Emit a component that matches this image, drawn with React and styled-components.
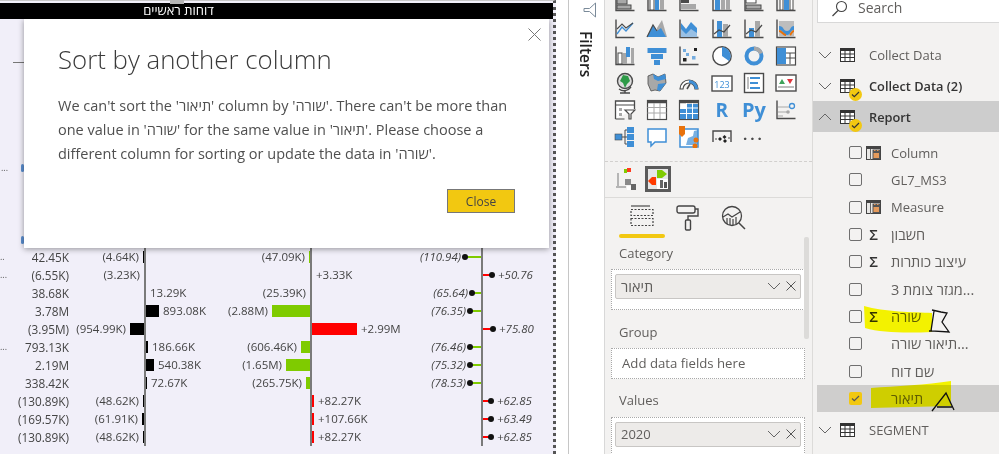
import React from 'react';
import styled, { createGlobalStyle } from 'styled-components';

const FONT = '"Open Sans", "Liberation Sans", sans-serif';
const BLUE = '#3f8fd6';
const DARK = '#4a4a4a';
const GRAY = '#a8a8a8';

const GlobalStyle = createGlobalStyle`
  html, body {
    margin: 0;
    padding: 0;
    background: #fff;
    font-family: ${FONT};
  }
`;

const Page = styled.div`
  position: relative;
  display: flex;
  width: 999px;
  height: 454px;
  overflow: hidden;
  background: #fff;
  filter: blur(0.3px);
`;

/* ---------- report canvas ---------- */

const Canvas = styled.div`
  position: relative;
  flex: none;
  width: 556px;
  height: 454px;
  margin-right: 12px;
  padding-top: 3px;
  box-sizing: border-box;
  background: #f1eff9;
  border-right: 3px dotted #555;
  border-top: 1px solid #c8c8c8;
`;

const Handle = styled.div`
  position: absolute;
  top: -1px;
  left: 170px;
  width: 14px;
  height: 4px;
  background: #b5b5b5;
`;

const TitleBar = styled.div`
  height: 16px;
  margin-top: -1px;
  background: #000;
  color: #fff;
  font-size: 13px;
  line-height: 15px;
  text-align: center;
  padding-right: 196px;
`;

const Dash = styled.div`
  position: absolute;
  left: 13px;
  top: 61px;
  width: 12px;
  height: 1px;
  background: #777;
`;

const BlueTick = styled.div`
  position: absolute;
  left: 21px;
  top: ${(p) => p.$top}px;
  width: 3px;
  height: 8px;
  border-radius: 2px;
  background: #5b8fd0;
`;

const HiddenDots = styled.div`
  position: absolute;
  left: 1px;
  top: 160px;
  font-size: 9px;
  color: #555;
`;

const ChartRows = styled.div`
  margin-top: 229px;
`;

const ChartRow = styled.div`
  display: grid;
  grid-template-columns: 70px 158px 172px 147px;
  height: 18px;
  font-size: 11.5px;
  line-height: 18px;
  color: #444;
`;

const FirstCol = styled.div`
  display: flex;
  justify-content: space-between;
  padding-right: 1px;
  font-size: 11.8px;
`;

const Dots = styled.span`
  color: #555;
  font-size: 9px;
`;

const Cell = styled.div`
  display: grid;
  grid-template-columns: ${(p) => p.$axis}px 1fr;
`;

const Half = styled.div`
  display: flex;
  align-items: center;
  gap: 4px;
  white-space: nowrap;
  justify-content: ${(p) => (p.$side === 'neg' ? 'flex-end' : 'flex-start')};
  border-left: ${(p) => (p.$side === 'pos' ? '2px solid #7a7a7a' : 'none')};
  font-style: ${(p) => (p.$italic ? 'italic' : 'normal')};
`;

const Bar = styled.div`
  height: 12px;
  width: ${(p) => p.$w}px;
  background: ${(p) => p.$color};
`;

const Stem = styled.div`
  position: relative;
  height: 2px;
  width: ${(p) => p.$w}px;
  background: ${(p) => p.$color};
  &::after {
    content: '';
    position: absolute;
    top: -2px;
    ${(p) => (p.$side === 'neg' ? 'left: -3px;' : 'right: -3px;')}
    width: 6px;
    height: 6px;
    border-radius: 50%;
    background: #111;
  }
`;

const PosStem = styled(Stem)`
  margin-right: 2px;
`;

const GREEN = '#7fcb00';
const RED = '#ff0000';

function BarCell({ axis, value, w, color, side }) {
  const bar = <Bar $w={w} $color={color} />;
  return (
    <Cell $axis={axis}>
      <Half $side="neg">
        {side === 'neg' && <span>{value}</span>}
        {side === 'neg' && bar}
      </Half>
      <Half $side="pos">
        {side === 'pos' && bar}
        {side === 'pos' && <span>{value}</span>}
      </Half>
    </Cell>
  );
}

function LolliCell({ value, w, side }) {
  const color = side === 'neg' ? GREEN : RED;
  return (
    <Cell $axis={81}>
      <Half $side="neg" $italic>
        {side === 'neg' && <span>{value}</span>}
        {side === 'neg' && <Stem $w={w} $color={color} $side="neg" />}
      </Half>
      <Half $side="pos" $italic>
        {side === 'pos' && <PosStem $w={w} $color={color} $side="pos" />}
        {side === 'pos' && <span>{value}</span>}
      </Half>
    </Cell>
  );
}

const rows = [
  { dots: '..', a: '42.45K', b: ['(4.64K)', 1, 'neg'], c: ['(47.09K)', 1, 'neg'], d: ['(110.94)', 16, 'neg'] },
  { dots: '...', a: '(6.55K)', b: ['(3.23K)', 0, 'neg'], c: ['+3.33K', 0, 'pos'], d: ['+50.76', 9, 'pos'] },
  { a: '38.68K', b: ['13.29K', 0, 'pos'], c: ['(25.39K)', 0, 'neg'], d: ['(65.64)', 9, 'neg'] },
  { a: '3.78M', b: ['893.08K', 13, 'pos'], c: ['(2.88M)', 43, 'neg'], d: ['(76.35)', 11, 'neg'] },
  { a: '(3.95M)', b: ['(954.99K)', 14, 'neg'], c: ['+2.99M', 45, 'pos'], d: ['+75.80', 10, 'pos'] },
  { dots: '...', a: '793.13K', b: ['186.66K', 2, 'pos'], c: ['(606.46K)', 9, 'neg'], d: ['(76.46)', 11, 'neg'] },
  { a: '2.19M', b: ['540.38K', 8, 'pos'], c: ['(1.65M)', 24, 'neg'], d: ['(75.32)', 11, 'neg'] },
  { a: '338.42K', b: ['72.67K', 1, 'pos'], c: ['(265.75K)', 4, 'neg'], d: ['(78.53)', 11, 'neg'] },
  { a: '(130.89K)', b: ['(48.62K)', 1, 'neg'], c: ['+82.27K', 2, 'pos'], d: ['+62.85', 8, 'pos'] },
  { a: '(169.57K)', b: ['(61.91K)', 2, 'neg'], c: ['+107.66K', 2, 'pos'], d: ['+63.49', 8, 'pos'] },
  { a: '(130.89K)', b: ['(48.62K)', 1, 'neg'], c: ['+82.27K', 2, 'pos'], d: ['+62.85', 8, 'pos'] },
];

/* ---------- dialog ---------- */

const Dialog = styled.div`
  position: absolute;
  left: 24px;
  top: 18px;
  width: 525px;
  height: 229px;
  box-sizing: border-box;
  padding: 22px 34px 0 34px;
  background: #fff;
  box-shadow: 0 1px 6px rgba(0, 0, 0, 0.4);
`;

const DialogTitle = styled.div`
  font-size: 25.8px;
  font-weight: 300;
  line-height: 36px;
  color: #3a3a3a;
`;

const DialogBody = styled.p`
  margin: 17px 0 0;
  font-size: 14.5px;
  line-height: 24px;
  color: #4f4f4f;
  width: 470px;
`;

const DialogFooter = styled.div`
  display: flex;
  justify-content: flex-end;
  margin-top: 23px;
`;

const CloseButton = styled.button`
  width: 68px;
  height: 24px;
  padding: 0;
  background: #f2c811;
  border: 1.5px solid #777;
  font-family: ${FONT};
  font-size: 12px;
  color: #444;
`;

const CloseX = styled.svg`
  position: absolute;
  right: 8px;
  top: 9px;
`;

/* ---------- filters strip ---------- */

const FilterPane = styled.div`
  flex: none;
  width: 37px;
  height: 454px;
  box-sizing: border-box;
  border-left: 1px solid #c6c6c6;
  border-right: 1px solid #d8d8d8;
  display: flex;
  flex-direction: column;
  align-items: center;
  padding-top: 2px;
`;

const FilterIcon = styled.svg`
  margin-left: 6px;
`;

const FilterLabel = styled.div`
  writing-mode: vertical-rl;
  margin-top: 13px;
  margin-right: 2px;
  font-size: 15.5px;
  font-weight: 600;
  line-height: 16px;
  color: #222;
`;

/* ---------- visualizations pane ---------- */

const VizPane = styled.div`
  position: relative;
  flex: none;
  width: 207px;
  height: 454px;
  overflow: hidden;
  background: #f3f2f1;
`;

const IconGrid = styled.div`
  display: grid;
  grid-template-columns: repeat(6, 32.2px);
  grid-auto-rows: 27px;
  margin: -11.5px 0 0 4px;
`;

const IconCell = styled.div`
  display: flex;
  align-items: center;
  justify-content: center;
`;

const LetterIcon = styled.span`
  color: ${(p) => p.$color || BLUE};
  font-size: ${(p) => p.$size}px;
  font-weight: 700;
  line-height: 1;
  letter-spacing: ${(p) => p.$spacing || 0}px;
  margin-top: ${(p) => p.$lift || 0}px;
`;

const DashedRule = styled.div`
  margin-top: 10px;
  border-top: 1px dashed #d2d0ce;
`;

const CustomIcons = styled.div`
  display: flex;
  align-items: center;
  gap: 8px;
  height: 26px;
  margin: 4px 0 0 10px;
`;

const SelectedVisual = styled.div`
  width: 26px;
  height: 26px;
  box-sizing: border-box;
  border: 3px solid #5a5a5a;
  background: #e6e6e6;
`;

const SolidRule = styled.div`
  margin-top: 5px;
  border-top: 1px solid #dcdbd9;
`;

const Tabs = styled.div`
  display: flex;
  margin-left: 14px;
  height: 40px;
`;

const Tab = styled.div`
  position: relative;
  width: 46px;
  display: flex;
  justify-content: center;
  padding-top: 7px;
  box-sizing: border-box;
  &::after {
    content: '';
    display: ${(p) => (p.$active ? 'block' : 'none')};
    position: absolute;
    left: 0;
    right: 0;
    bottom: 0;
    height: 4px;
    border-radius: 2px;
    background: #f2c811;
  }
`;

const Section = styled.div`
  margin: ${(p) => p.$top}px 0 0 14px;
  height: 18px;
  font-size: 13px;
  line-height: 18px;
  color: #605e5c;
`;

const Well = styled.div`
  box-sizing: border-box;
  width: 194px;
  min-height: ${(p) => p.$height}px;
  margin: ${(p) => p.$top}px 0 0 6px;
  padding: ${(p) => (p.$empty ? 2 : 4)}px 3px 4px;
  background: #fff;
  border: 1px dotted #a9a9a9;
`;

const Placeholder = styled.div`
  padding: 3px 7px 0 7px;
  font-size: 13.2px;
  line-height: 18px;
  color: #605e5c;
`;

const Pill = styled.div`
  display: flex;
  align-items: center;
  justify-content: space-between;
  height: 25px;
  box-sizing: border-box;
  padding: 0 4px 0 5px;
  background: #edebe9;
  border: 1px solid #c8c6c4;
  border-radius: 2px;
  font-size: 13px;
  color: #605e5c;
`;

const PillHebrew = styled.span`
  font-size: 14.5px;
`;

const PillActions = styled.div`
  display: flex;
  align-items: center;
  gap: 5px;
`;

const Scrollbar = styled.div`
  position: absolute;
  left: 199px;
  top: 237px;
  width: 5px;
  height: 102px;
  border-radius: 2px;
  background: #dcdbd9;
`;

/* ---------- fields pane ---------- */

const FieldsPane = styled.div`
  position: relative;
  flex: 1;
  height: 454px;
  overflow: hidden;
  background: #f3f2f1;
  border-left: 1px solid #dcdbd9;
`;

const SearchBox = styled.div`
  display: flex;
  align-items: flex-start;
  gap: 10px;
  height: 23px;
  margin-left: 4px;
  padding-left: 13px;
  box-sizing: border-box;
  background: #fff;
  border: 1px solid #d8d8d8;
  border-top: none;
  border-right: none;
  font-size: 14px;
  line-height: 15px;
  color: #605e5c;
`;

const FieldList = styled.div`
  margin-top: 16px;
`;

const TableRow = styled.div`
  position: relative;
  display: flex;
  align-items: center;
  height: 31px;
  padding-left: 5px;
  background: ${(p) => (p.$open ? '#cdcdcd' : 'transparent')};
  font-size: ${(p) => (p.$bold ? 12.8 : 13)}px;
  font-weight: ${(p) => (p.$bold ? 600 : 400)};
  color: ${(p) => (p.$bold ? '#333' : '#605e5c')};
  margin-top: ${(p) => p.$top || 0}px;
`;

const TableIconSlot = styled.div`
  position: relative;
  display: flex;
  width: 29px;
  margin-left: 8px;
`;

const Badge = styled.div`
  position: absolute;
  left: 9px;
  top: 9px;
  width: 13px;
  height: 13px;
  border-radius: 50%;
  background: #f2c811;
  display: flex;
  align-items: center;
  justify-content: center;
`;

const ItemList = styled.div`
  padding-top: 7px;
`;

const ItemRow = styled.div`
  display: flex;
  align-items: center;
  height: 27.3px;
  margin-left: 4px;
  padding-left: 32px;
  background: ${(p) => (p.$selected ? '#cfcecd' : 'transparent')};
  color: #605e5c;
  white-space: nowrap;
`;

const ItemName = styled.span`
  font-size: ${(p) => (p.$he ? 14.5 : 13)}px;
`;

const Check = styled.div`
  flex: none;
  width: 13px;
  height: 13px;
  box-sizing: border-box;
  border: ${(p) => (p.$on ? 'none' : '1.5px solid #6f6f6f')};
  border-radius: 2px;
  background: ${(p) => (p.$on ? '#f2c811' : 'transparent')};
  display: flex;
  align-items: center;
  justify-content: center;
`;

const ItemIcon = styled.div`
  flex: none;
  width: 15px;
  height: 15px;
  margin: 0 10px 0 4px;
  display: flex;
  align-items: center;
  justify-content: center;
  color: #333;
  font-size: 15px;
  font-weight: 600;
  line-height: 15px;
`;

const Highlighter = styled.svg`
  position: absolute;
  left: 0;
  top: 0;
  mix-blend-mode: multiply;
  pointer-events: none;
`;

const Scribble = styled.svg`
  position: absolute;
  left: 0;
  top: 0;
  pointer-events: none;
`;

/* ---------- drawings ---------- */

const Ico = ({ children, size = 22 }) => (
  <svg width={size} height={size} viewBox="0 0 22 22" fill="none">
    {children}
  </svg>
);

const AxisL = () => <path d="M2 1.5v18h18.5" stroke={DARK} strokeWidth="1.4" />;

const visuals = [
  // row 1, only the bottoms show
  <Ico key="a1"><AxisL /><rect x="3" y="8" width="10" height="5" fill={GRAY} stroke={DARK} /><rect x="3" y="14" width="14" height="4" fill={GRAY} stroke={DARK} /></Ico>,
  <Ico key="a2"><AxisL /><rect x="4" y="5" width="4" height="14" fill="#fff" stroke={DARK} /><rect x="9" y="3" width="4" height="16" fill={BLUE} /><rect x="14" y="8" width="4" height="11" fill={GRAY} /></Ico>,
  <Ico key="a3"><AxisL /><rect x="3" y="7" width="8" height="5" fill={DARK} /><rect x="3" y="13" width="15" height="5" fill={GRAY} /></Ico>,
  <Ico key="a4"><AxisL /><rect x="4" y="3" width="5" height="16" fill={BLUE} /><rect x="10" y="6" width="4" height="13" fill={GRAY} /><rect x="15" y="5" width="4" height="14" fill={GRAY} /></Ico>,
  <Ico key="a5"><AxisL /><rect x="3" y="8" width="10" height="4" fill="#fff" stroke={DARK} /><rect x="3" y="14" width="15" height="4" fill={GRAY} stroke={DARK} /></Ico>,
  <Ico key="a6"><AxisL /><rect x="5" y="5" width="3" height="14" fill="#fff" stroke={DARK} /><rect x="9" y="2" width="5" height="17" fill={BLUE} /><rect x="15" y="8" width="3" height="11" fill="#fff" stroke={DARK} /></Ico>,
  // row 2
  <Ico key="b1"><AxisL /><path d="M3 16l5-7 4 4 7-8" stroke={BLUE} strokeWidth="1.3" /><path d="M3 11l5-5 4 4 7-5" stroke={DARK} strokeWidth="1.1" /></Ico>,
  <Ico key="b2"><path d="M11 10l5-8 5 17H11z" fill={GRAY} /><path d="M1 19l6-12 4 6 4-3 5 9z" fill={BLUE} /><path d="M1 19l6-12 4 6" stroke={DARK} strokeWidth="1.2" /></Ico>,
  <Ico key="b3"><AxisL /><path d="M3 5l5 6 5-7 6 6v9H3z" fill={BLUE} /><path d="M3 11l5 5 5-5 6 4v4H3z" fill="#f3f2f1" opacity=".5" /></Ico>,
  <Ico key="b4"><AxisL /><rect x="6" y="3" width="5" height="16" fill={BLUE} /><rect x="12" y="6" width="5" height="13" fill={GRAY} /><path d="M3 16l5-4 5 2 6-7" stroke={DARK} strokeWidth="1.2" /></Ico>,
  <Ico key="b5"><AxisL /><rect x="6" y="10" width="5" height="9" fill={BLUE} /><rect x="12" y="3" width="5" height="16" fill={GRAY} /><path d="M3 16l5-4 5 2 6-7" stroke={DARK} strokeWidth="1.2" /></Ico>,
  <Ico key="b6"><AxisL /><rect x="4" y="3" width="15" height="16" fill="#bdbdbd" /><path d="M4 8c5 0 4 5 8 5s3-5 7-5v4c-4 0-3 5-7 5s-4-5-8-5z" fill={BLUE} /><path d="M4 13c3 0 4 4 7 4M19 13c-2 0-3 3-4 4" stroke="#e8720c" strokeWidth="2" /></Ico>,
  // row 3
  <Ico key="c1"><AxisL /><rect x="4" y="8" width="4" height="11" fill="#fff" stroke={DARK} /><rect x="9" y="8" width="4" height="11" fill={GRAY} /><rect x="12" y="2" width="4" height="10" fill={BLUE} /><rect x="17" y="3" width="3" height="16" fill={GRAY} /></Ico>,
  <Ico key="c2"><path d="M1.5 3h19v5h-19z" fill={BLUE} /><path d="M5 9h12v5H5z" fill={BLUE} /><path d="M8 15h6v5H8z" fill={BLUE} /></Ico>,
  <Ico key="c3"><AxisL /><rect x="5" y="4" width="3" height="3" fill={BLUE} opacity=".7" /><rect x="8" y="8" width="3" height="3" fill={BLUE} opacity=".7" /><rect x="5" y="13" width="3.5" height="3.5" fill="#222" /><rect x="14" y="11" width="3.5" height="3.5" fill={BLUE} opacity=".7" /><rect x="16" y="3" width="3" height="3" fill="#222" /></Ico>,
  <Ico key="c4"><circle cx="11" cy="11" r="9.2" fill="#fff" stroke={DARK} strokeWidth="1.4" /><path d="M11 11V2a9 9 0 0 1 7 14z" fill={BLUE} /></Ico>,
  <Ico key="c5"><circle cx="11" cy="11" r="7.5" stroke={BLUE} strokeWidth="4" /><path d="M11 3.5a7.5 7.5 0 0 1 7 5" stroke={GRAY} strokeWidth="4" /></Ico>,
  <Ico key="c6"><rect x="1.5" y="2" width="19" height="18" fill="#fff" stroke={DARK} strokeWidth="1.2" /><rect x="2" y="3" width="9" height="16" fill={BLUE} /><path d="M11 8h9M15 8v11M11 13h9" stroke={DARK} /></Ico>,
  // row 4
  <Ico key="d1"><circle cx="11" cy="9" r="7.5" fill="#ddd" stroke={DARK} strokeWidth="1.4" /><path d="M9 3l5 1 2 5-3 3-2 4-2-5-3-2z" fill="#2e9a47" /><path d="M5 17c4 3 9 2 12-2M11 19v2M6 21h10" stroke={DARK} strokeWidth="1.4" /></Ico>,
  <Ico key="d2"><path d="M2 4l5-2 5 3 7-3 1 9-6 8-5-1-4 1-3-7z" fill={GRAY} stroke={DARK} strokeWidth=".8" /><path d="M7 2l5 3 7-3 1 5-8 2-4-2z" fill={BLUE} /><path d="M12 12l8-1-6 8-3-1z" fill={BLUE} /></Ico>,
  <Ico key="d3"><path d="M2 17a9 9 0 0 1 18 0h-3a6 6 0 0 0-12 0z" fill="#fff" stroke={DARK} strokeWidth="1.2" /><path d="M11 8a9 9 0 0 1 9 9h-3a6 6 0 0 0-6-6z" fill={BLUE} /><path d="M9 17l3-5" stroke={DARK} strokeWidth="1.5" /></Ico>,
  <Ico key="d4"><rect x="1" y="4" width="20" height="15" fill="#fff" stroke={DARK} strokeWidth="1.4" /><text x="11" y="15.5" textAnchor="middle" fontSize="9" fontFamily={FONT} fill={BLUE}>123</text></Ico>,
  <Ico key="d5"><rect x="1.5" y="1.5" width="19" height="19" fill="#fff" stroke={DARK} strokeWidth="1.4" /><path d="M5 5v12" stroke={GRAY} strokeWidth="1.5" /><path d="M7 6h10M7 11h8M7 16h10" stroke={BLUE} strokeWidth="2" /></Ico>,
  <Ico key="d6"><rect x="1" y="3" width="20" height="16" fill="#fff" stroke={DARK} strokeWidth="1.4" /><path d="M4 12l3-5 3 5z" fill="#3fa35b" /><path d="M12 7h6l-3 5z" fill="#e0363d" /><path d="M3 15h16" stroke={GRAY} strokeWidth="1.5" /></Ico>,
  // row 5
  <Ico key="e1"><path d="M1.5 20V2h19v8" stroke={DARK} strokeWidth="1.3" fill="#fff" /><path d="M1.5 6h19M1.5 20h9" stroke={DARK} strokeWidth="1.2" /><rect x="5" y="9" width="3" height="3" fill={GRAY} /><rect x="5" y="14" width="3" height="3" fill={GRAY} /><path d="M11 11h10l-4 4v5h-2v-5z" fill="#fff" stroke={DARK} strokeWidth="1.2" /></Ico>,
  <Ico key="e2"><rect x="1.5" y="1.5" width="19" height="19" fill="#fff" stroke={DARK} strokeWidth="1.2" /><path d="M1.5 3h19" stroke={DARK} strokeWidth="2.5" /><path d="M1.5 8.5h19M1.5 14h19M8 4v16M14 4v16" stroke={GRAY} /></Ico>,
  <Ico key="e3"><rect x="1.5" y="1.5" width="19" height="19" fill="#fff" stroke={DARK} strokeWidth="1.2" /><path d="M1.5 3h19" stroke={DARK} strokeWidth="2.5" /><rect x="2" y="10" width="18" height="10" fill={BLUE} /><rect x="9" y="5" width="11" height="15" fill={BLUE} /><path d="M2 9h18M2 14.5h18M8.5 4v16M14.5 4v16" stroke="#fff" /></Ico>,
  <LetterIcon key="e4" $size={19}>R</LetterIcon>,
  <LetterIcon key="e5" $size={20}>Py</LetterIcon>,
  <Ico key="e6"><AxisL /><path d="M3 8h12M3 13h9M3 17h5" stroke={GRAY} strokeWidth="1.2" /><circle cx="17" cy="7" r="2.5" stroke={BLUE} strokeWidth="1.3" /><circle cx="13" cy="13" r="1.8" fill={GRAY} /></Ico>,
  // row 6
  <Ico key="f1"><rect x="1" y="8" width="7" height="6" fill={BLUE} stroke={DARK} strokeWidth=".6" /><path d="M8 11h3M11 4v14M11 4h2M11 11h2M11 18h2" stroke={DARK} /><rect x="13" y="1" width="7" height="6" fill={BLUE} /><rect x="13" y="8" width="7" height="6" fill={BLUE} /><rect x="13" y="15" width="7" height="6" fill={BLUE} /></Ico>,
  <Ico key="f2"><path d="M2 3h18v13H9l-4 4v-4H2z" fill="#fff" stroke={BLUE} strokeWidth="1.5" /></Ico>,
  <Ico key="f3"><rect x="2" y="3" width="18" height="18" fill="#fff" stroke={BLUE} strokeWidth="1.5" /><path d="M8 19l2-7 5-2 1-5 4-1v15z" fill={BLUE} opacity=".7" /><path d="M1 0h6v8l-3 3-3-3z" fill="#e8720c" /><circle cx="18" cy="14" r="2.5" fill="#e8720c" /><circle cx="17" cy="20" r="2.5" fill="#e8720c" /></Ico>,
  <Ico key="f4"><path d="M2 16V5h18v11" stroke={DARK} strokeWidth="1.4" /><path d="M7 13l2-2 2 2-2 2zM11.5 11l2-2 2 2-2 2zM12 15l2-2 2 2-2 2z" fill="#222" /><path d="M4 13h2M17 12h2" stroke={DARK} /></Ico>,
  <LetterIcon key="f5" $size={15} $color={DARK} $spacing={3} $lift={-6}>...</LetterIcon>,
];

const Chevron = ({ up }) => (
  <svg width="14" height="8" viewBox="0 0 14 8" fill="none">
    <path d={up ? 'M1 7l6-6 6 6' : 'M1 1l6 6 6-6'} stroke="#666" strokeWidth="1" />
  </svg>
);

const X = ({ size = 10, color = '#555' }) => (
  <svg width={size} height={size} viewBox="0 0 10 10" fill="none">
    <path d="M.5.5l9 9M9.5.5l-9 9" stroke={color} strokeWidth="1" />
  </svg>
);

const TableIcon = () => (
  <svg width="15" height="14" viewBox="0 0 15 14" fill="none">
    <rect x=".5" y=".5" width="14" height="13" fill="#fff" stroke="#333" />
    <path d="M0 1.5h15" stroke="#333" strokeWidth="3" />
    <path d="M0 6h15M0 9.5h15M5 3v11M10 3v11" stroke="#333" />
  </svg>
);

const CalcIcon = () => (
  <svg width="15" height="14" viewBox="0 0 15 14" fill="none">
    <rect x=".5" y=".5" width="14" height="13" fill="#e8e7e5" stroke="#444" />
    <path d="M0 1.5h15" stroke="#444" strokeWidth="3" />
    <path d="M4.5 3v11" stroke="#666" />
    <rect x="6.5" y="3.5" width="7.5" height="9.5" fill="#555" />
    <rect x="7.5" y="7" width="5.5" height="5" fill="#e59a5b" />
    <path d="M8 4.500h1.500M11 4.500h1.500" stroke="#e59a5b" />
  </svg>
);

const Tick = ({ color = '#333' }) => (
  <svg width="9" height="7" viewBox="0 0 9 7" fill="none">
    <path d="M1 3.5l2.3 2.2L8 1" stroke={color} strokeWidth="1.2" />
  </svg>
);

const items = [
  { name: 'Column', icon: 'calc' },
  { name: 'GL7_MS3' },
  { name: 'Measure', icon: 'calc' },
  { name: 'חשבון', icon: 'sum', he: true },
  { name: 'עיצוב כותרות', icon: 'sum', he: true },
  { name: 'מגזר צומת 3...', he: true },
  { name: 'שורה', icon: 'sum', he: true },
  { name: 'תיאור שורה...', he: true },
  { name: 'שם דוח', he: true },
  { name: 'תיאור', checked: true, he: true },
];

export default function App() {
  return (
    <Page>
      <GlobalStyle />
      <Canvas>
        <Handle />
        <TitleBar>דוחות ראשיים</TitleBar>
        <Dash />
        <BlueTick $top={163} />
        <BlueTick $top={235} />
        <HiddenDots>...</HiddenDots>
        <ChartRows>
          {rows.map((r, i) => (
            <ChartRow key={i}>
              <FirstCol>
                <Dots>{r.dots}</Dots>
                <span>{r.a}</span>
              </FirstCol>
              <BarCell axis={74} value={r.b[0]} w={r.b[1]} side={r.b[2]} color="#000" />
              <BarCell axis={82} value={r.c[0]} w={r.c[1]} side={r.c[2]} color={r.c[2] === 'neg' ? GREEN : RED} />
              <LolliCell value={r.d[0]} w={r.d[1]} side={r.d[2]} />
            </ChartRow>
          ))}
        </ChartRows>
        <Dialog>
          <CloseX width="13" height="13" viewBox="0 0 13 13" fill="none">
            <path d="M.5.5l12 12M12.5.5l-12 12" stroke="#777" strokeWidth="1" />
          </CloseX>
          <DialogTitle>Sort by another column</DialogTitle>
          <DialogBody>
            We can't sort the 'תיאור' column by 'שורה'. There can't be more than one value in 'שורה' for the same value in 'תיאור'. Please choose a different column for sorting or update the data in 'שורה'.
          </DialogBody>
          <DialogFooter>
            <CloseButton>Close</CloseButton>
          </DialogFooter>
        </Dialog>
      </Canvas>

      <FilterPane>
        <FilterIcon width="14" height="16" viewBox="0 0 14 16" fill="none">
          <path d="M12.5 1v14L6.5 9.5H1V6.5h5.5z" stroke="#7a8a99" strokeWidth="1" />
        </FilterIcon>
        <FilterLabel>Filters</FilterLabel>
      </FilterPane>

      <VizPane>
        <IconGrid>
          {visuals.map((v, i) => (
            <IconCell key={i}>{v}</IconCell>
          ))}
        </IconGrid>
        <DashedRule />
        <CustomIcons>
          <svg width="22" height="24" viewBox="0 0 22 24" fill="none">
            <path d="M3 6v14h8M3 20h-2" stroke="#b5b5b5" strokeWidth="2" />
            <rect x="9" y="2" width="3" height="4" fill="#7fcb00" />
            <rect x="12" y="1" width="4" height="4" fill="#ff3b1f" />
            <rect x="10" y="12" width="6" height="6" fill="#8a8a8a" />
            <rect x="16" y="17" width="5" height="6" fill="#666" />
            <rect x="12" y="19" width="4" height="4" fill="#fff" />
          </svg>
          <SelectedVisual>
            <svg width="20" height="20" viewBox="0 0 20 20" fill="none">
              <rect x="9" y="10" width="11" height="10" fill="#fff" />
              <path d="M9 1h5l5 4-5 4H9z" fill="#7fcb00" />
              <path d="M8 8v8H4L0 12l4-4z" fill="#ff3b00" />
              <rect x="12" y="11" width="3" height="8" fill="#666" />
              <rect x="16" y="13" width="3" height="6" fill="#555" />
            </svg>
          </SelectedVisual>
        </CustomIcons>
        <SolidRule />
        <Tabs>
          <Tab $active>
            <svg width="26" height="24" viewBox="0 0 26 24" fill="none">
              <path d="M2 1h19" stroke="#555" strokeWidth="1.3" />
              <path d="M2 4.5h22v6H2zM2 13.5h22v7H2z" stroke="#444" strokeWidth="1.2" strokeDasharray="2 1.5" />
            </svg>
          </Tab>
          <Tab>
            <svg width="24" height="26" viewBox="0 0 24 26" fill="none">
              <rect x="1" y="1" width="18" height="7" rx="2" stroke="#444" strokeWidth="1.4" />
              <path d="M19 4h3v7H12v4" stroke="#444" strokeWidth="1.4" />
              <rect x="9.5" y="15" width="5" height="10" rx="1" stroke="#444" strokeWidth="1.4" />
            </svg>
          </Tab>
          <Tab>
            <svg width="26" height="26" viewBox="0 0 26 26" fill="none">
              <circle cx="11" cy="11" r="9.5" stroke="#444" strokeWidth="1.3" />
              <path d="M2 12l5-3 4 3 8-5" stroke="#444" strokeWidth="1.2" />
              <path d="M6 13v6M9 13v7M12 14v6M15 12v7" stroke="#444" strokeWidth="1.2" />
              <path d="M18 18l6 6" stroke="#444" strokeWidth="1.5" />
            </svg>
          </Tab>
        </Tabs>
        <Section $top={6}>Category</Section>
        <Well $top={7} $height={41}>
          <Pill>
            <PillHebrew>תיאור</PillHebrew>
            <PillActions>
              <Chevron />
              <X />
            </PillActions>
          </Pill>
        </Well>
        <Section $top={13}>Group</Section>
        <Well $top={7} $height={31} $empty>
          <Placeholder>Add data fields here</Placeholder>
        </Well>
        <Section $top={12}>Values</Section>
        <Well $top={8} $height={60}>
          <Pill>
            <span>2020</span>
            <PillActions>
              <Chevron />
              <X />
            </PillActions>
          </Pill>
        </Well>
        <Scrollbar />
      </VizPane>

      <FieldsPane>
        <SearchBox>
          <svg width="17" height="17" viewBox="0 0 17 17" fill="none">
            <circle cx="10.5" cy="6.5" r="5" stroke="#444" strokeWidth="1.1" />
            <path d="M7 10.5L1.500 16" stroke="#444" strokeWidth="1.2" />
          </svg>
          <span>Search</span>
        </SearchBox>
        <FieldList>
          <TableRow>
            <Chevron />
            <TableIconSlot><TableIcon /></TableIconSlot>
            Collect Data
          </TableRow>
          <TableRow $bold>
            <Chevron />
            <TableIconSlot>
              <TableIcon />
              <Badge><Tick /></Badge>
            </TableIconSlot>
            Collect Data (2)
          </TableRow>
          <TableRow $bold $open>
            <Chevron up />
            <TableIconSlot>
              <TableIcon />
              <Badge><Tick /></Badge>
            </TableIconSlot>
            Report
          </TableRow>
          <ItemList>
            {items.map((it) => (
              <ItemRow key={it.name} $selected={it.checked}>
                <Check $on={it.checked}>{it.checked && <Tick color="#555" />}</Check>
                <ItemIcon>
                  {it.icon === 'calc' && <CalcIcon />}
                  {it.icon === 'sum' && 'Σ'}
                </ItemIcon>
                <ItemName $he={it.he}>{it.name}</ItemName>
              </ItemRow>
            ))}
          </ItemList>
          <TableRow $top={3}>
            <Chevron />
            <TableIconSlot><TableIcon /></TableIconSlot>
            SEGMENT
          </TableRow>
        </FieldList>
        <Highlighter width="185" height="454">
          <path d="M51 306c20 6 50 6 68 7l0 19c-24 1-50 1-67-4z" fill="#ffff00" />
          <path d="M58 388c24-2 56-3 80-7l0 25c-26 1-55 1-80 2z" fill="#ffff00" />
        </Highlighter>
        <Scribble width="185" height="454" fill="none">
          <path d="M119 310l9 2 6 1-5 9 7 10-18-1 3-20M116 331h3" stroke="#111" strokeWidth="1.3" />
          <path d="M119 411l14-18 8 17M124 407h15" stroke="#111" strokeWidth="1.3" />
        </Scribble>
      </FieldsPane>
    </Page>
  );
}
